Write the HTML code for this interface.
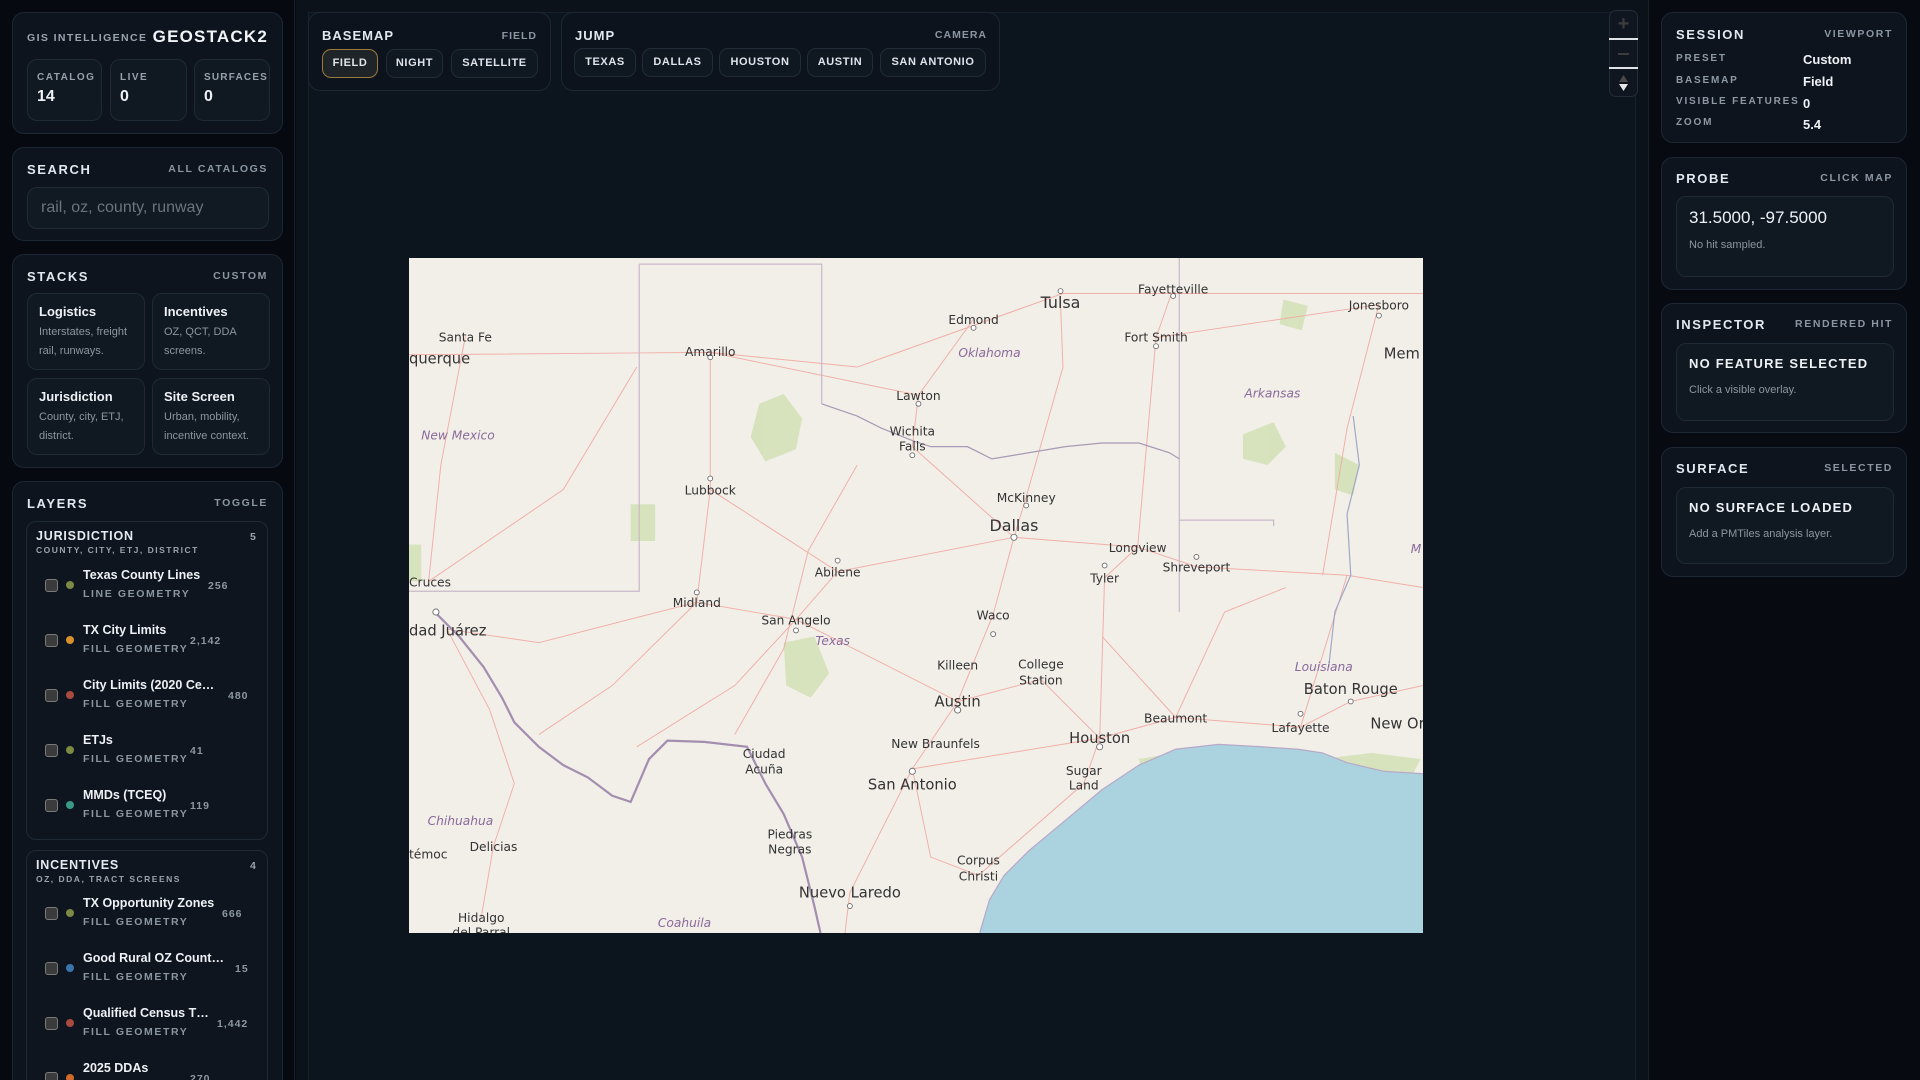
<!DOCTYPE html>
<html><head><meta charset="utf-8">
<style>
*{box-sizing:border-box;margin:0;padding:0}
html,body{width:1920px;height:1080px;overflow:hidden;background:#070b11;font-family:"Liberation Sans",sans-serif;color:#e6eaf0}
#wrap{position:relative;width:1920px;height:1080px;overflow:hidden}
.abs{position:absolute}
.card{position:absolute;background:#0d141d;border:1px solid #1d2733;border-radius:12px}
.h{position:absolute;font-size:13px;font-weight:bold;letter-spacing:1.6px;color:#e3e7ee}
.hr{position:absolute;font-size:10.5px;font-weight:bold;letter-spacing:1.6px;color:#8c96a3;text-align:right}
.box{position:absolute;background:#101821;border:1px solid #1f2a36;border-radius:10px}
.lab{font-size:10px;font-weight:bold;letter-spacing:1.5px;color:#97a1ad}
.num{font-size:16px;font-weight:bold;color:#eef1f5;margin-top:5px}
.tile b{display:block;font-size:13px;color:#eef1f5;margin-bottom:4px}
.tile span{display:block;font-size:11px;line-height:19px;color:#8d96a1}
.row{position:absolute;left:45px;height:40px;width:215px}
.cb{position:absolute;left:0;top:14px;width:13px;height:13px;background:#3b3b3b;border:1px solid #7a7a7a;border-radius:3px}
.dot{position:absolute;left:21px;top:16px;width:8px;height:8px;border-radius:50%}
.nm{position:absolute;left:38px;top:3px;font-size:12.5px;font-weight:bold;color:#eef1f5;white-space:nowrap}
.gm{position:absolute;left:38px;top:23px;font-size:10.5px;font-weight:bold;letter-spacing:1.6px;color:#8b95a1}
.ct{position:absolute;top:15px;font-size:10.5px;font-weight:bold;letter-spacing:1px;color:#8d97a3}
.btn{position:absolute;top:49px;height:29px;border:1px solid #212c38;border-radius:9px;background:#0f1720;font-size:11px;font-weight:bold;letter-spacing:.6px;color:#dfe4ea;text-align:center;line-height:27px}
.kv{position:absolute;left:14px;font-size:10px;font-weight:bold;letter-spacing:1.8px;color:#8f99a5}
.vv{position:absolute;left:141px;font-size:13px;font-weight:bold;color:#eef1f5}
svg text{font-family:"DejaVu Sans","Liberation Sans",sans-serif}
</style></head><body><div id="wrap">

<div class="abs" style="left:0;top:0;width:295px;height:1080px;background:#060a10;border-right:1px solid #18212b"></div>

<div class="card" style="left:12px;top:12px;width:271px;height:122px">
  <div class="abs" style="left:14px;top:19px;font-size:10.5px;font-weight:bold;letter-spacing:1.4px;color:#9aa4b0">GIS INTELLIGENCE</div>
  <div class="abs" style="right:14px;top:14px;font-size:17px;font-weight:bold;letter-spacing:1.2px;color:#f1f4f7">GEOSTACK2</div>
  <div class="box" style="left:14px;top:46px;width:75px;height:62px;padding:12px 9px"><div class="lab">CATALOG</div><div class="num">14</div></div>
  <div class="box" style="left:97px;top:46px;width:77px;height:62px;padding:12px 9px"><div class="lab">LIVE</div><div class="num">0</div></div>
  <div class="box" style="left:181px;top:46px;width:76px;height:62px;padding:12px 9px"><div class="lab" style="letter-spacing:1.2px">SURFACES</div><div class="num">0</div></div>
</div>

<div class="card" style="left:12px;top:147px;width:271px;height:94px">
  <div class="h" style="left:14px;top:14px">SEARCH</div>
  <div class="hr" style="right:14px;top:15px">ALL CATALOGS</div>
  <div class="box" style="left:14px;top:39px;width:242px;height:42px;padding:0 13px;line-height:40px;font-size:16px;color:#6b737c;background:#111922">rail, oz, county, runway</div>
</div>

<div class="card" style="left:12px;top:254px;width:271px;height:214px">
  <div class="h" style="left:14px;top:14px">STACKS</div>
  <div class="hr" style="right:14px;top:15px">CUSTOM</div>
  <div class="box tile" style="left:14px;top:38px;width:118px;height:77px;padding:10px 11px"><b>Logistics</b><span>Interstates, freight rail, runways.</span></div>
  <div class="box tile" style="left:139px;top:38px;width:118px;height:77px;padding:10px 11px"><b>Incentives</b><span>OZ, QCT, DDA screens.</span></div>
  <div class="box tile" style="left:14px;top:123px;width:118px;height:77px;padding:10px 11px"><b>Jurisdiction</b><span>County, city, ETJ, district.</span></div>
  <div class="box tile" style="left:139px;top:123px;width:118px;height:77px;padding:10px 11px"><b>Site Screen</b><span>Urban, mobility, incentive context.</span></div>
</div>

<div class="card" style="left:12px;top:481px;width:271px;height:640px">
  <div class="h" style="left:14px;top:14px">LAYERS</div>
  <div class="hr" style="right:14px;top:15px">TOGGLE</div>
</div>
<div class="box" style="left:26px;top:521px;width:242px;height:319px;background:#0e151e"></div>
<div class="abs" style="left:36px;top:529px;font-size:12.5px;font-weight:bold;letter-spacing:.8px">JURISDICTION</div>
<div class="abs" style="left:36px;top:545px;font-size:8.5px;font-weight:bold;letter-spacing:1.5px;color:#9aa3ae">COUNTY, CITY, ETJ, DISTRICT</div>
<div class="abs" style="left:250px;top:531px;font-size:10.5px;font-weight:bold;color:#9aa3ae">5</div>

<div class="row" style="top:565px"><div class="cb"></div><div class="dot" style="background:#7c8a43"></div><div class="nm">Texas County Lines</div><div class="gm">LINE GEOMETRY</div><div class="ct" style="left:163px">256</div></div>
<div class="row" style="top:620px"><div class="cb"></div><div class="dot" style="background:#d8912c"></div><div class="nm">TX City Limits</div><div class="gm">FILL GEOMETRY</div><div class="ct" style="left:145px">2,142</div></div>
<div class="row" style="top:675px"><div class="cb"></div><div class="dot" style="background:#a84b3e"></div><div class="nm">City Limits (2020 Ce…</div><div class="gm">FILL GEOMETRY</div><div class="ct" style="left:183px">480</div></div>
<div class="row" style="top:730px"><div class="cb"></div><div class="dot" style="background:#7c8a43"></div><div class="nm">ETJs</div><div class="gm">FILL GEOMETRY</div><div class="ct" style="left:145px">41</div></div>
<div class="row" style="top:785px"><div class="cb"></div><div class="dot" style="background:#3a9a87"></div><div class="nm">MMDs (TCEQ)</div><div class="gm">FILL GEOMETRY</div><div class="ct" style="left:145px">119</div></div>

<div class="box" style="left:26px;top:850px;width:242px;height:260px;background:#0e151e"></div>
<div class="abs" style="left:36px;top:858px;font-size:12.5px;font-weight:bold;letter-spacing:.8px">INCENTIVES</div>
<div class="abs" style="left:36px;top:874px;font-size:8.5px;font-weight:bold;letter-spacing:1.5px;color:#9aa3ae">OZ, DDA, TRACT SCREENS</div>
<div class="abs" style="left:250px;top:860px;font-size:10.5px;font-weight:bold;color:#9aa3ae">4</div>

<div class="row" style="top:893px"><div class="cb"></div><div class="dot" style="background:#7c8a43"></div><div class="nm">TX Opportunity Zones</div><div class="gm">FILL GEOMETRY</div><div class="ct" style="left:177px">666</div></div>
<div class="row" style="top:948px"><div class="cb"></div><div class="dot" style="background:#3a74ad"></div><div class="nm">Good Rural OZ Count…</div><div class="gm">FILL GEOMETRY</div><div class="ct" style="left:190px">15</div></div>
<div class="row" style="top:1003px"><div class="cb"></div><div class="dot" style="background:#a84b3e"></div><div class="nm">Qualified Census T…</div><div class="gm">FILL GEOMETRY</div><div class="ct" style="left:172px">1,442</div></div>
<div class="row" style="top:1058px"><div class="cb"></div><div class="dot" style="background:#d06a2c"></div><div class="nm">2025 DDAs</div><div class="gm">FILL GEOMETRY</div><div class="ct" style="left:145px">270</div></div>

<!-- center -->
<div class="abs" style="left:296px;top:0;width:1352px;height:1080px;background:#0b121a"></div>
<div class="abs" style="left:308px;top:12px;width:1328px;height:1080px;border-left:1px solid #17212c;border-top:1px solid #17212c;border-right:1px solid #17212c;background:#0c141d"></div>
<div class="abs" style="left:1648px;top:0;width:1px;height:1080px;background:#18222d"></div>
<div class="abs" style="left:1649px;top:0;width:271px;height:1080px;background:#070b11"></div>

<div class="card" style="left:308px;top:12px;width:243px;height:79px;background:#0c131c">
  <div class="h" style="left:13px;top:15px;letter-spacing:1px">BASEMAP</div>
  <div class="hr" style="right:13px;top:17px;letter-spacing:1px">FIELD</div>
</div>
<div class="btn" style="left:322px;width:56px;background:#1f2429;border-color:#9b7a3d">FIELD</div>
<div class="btn" style="left:386px;width:57px">NIGHT</div>
<div class="btn" style="left:451px;width:87px">SATELLITE</div>

<div class="card" style="left:561px;top:12px;width:439px;height:79px;background:#0c131c">
  <div class="h" style="left:13px;top:15px;letter-spacing:1px">JUMP</div>
  <div class="hr" style="right:12px;top:16px;letter-spacing:1px">CAMERA</div>
</div>
<div class="btn" style="left:574px;width:62px;top:48px">TEXAS</div>
<div class="btn" style="left:642px;width:71px;top:48px">DALLAS</div>
<div class="btn" style="left:719px;width:82px;top:48px">HOUSTON</div>
<div class="btn" style="left:807px;width:66px;top:48px">AUSTIN</div>
<div class="btn" style="left:880px;width:106px;top:48px">SAN ANTONIO</div>

<!-- zoom controls -->
<div class="abs" style="left:1609px;top:10px;width:29px;height:87px;background:#0f161f;border:1px solid #232d38;border-radius:7px"></div>
<div class="abs" style="left:1609px;top:38px;width:29px;height:2px;background:#dfe3e8"></div>
<div class="abs" style="left:1609px;top:67px;width:29px;height:2px;background:#dfe3e8"></div>
<div class="abs" style="left:1609px;top:13px;width:29px;text-align:center;font-size:20px;font-weight:bold;color:#3c3c3c">+</div>
<div class="abs" style="left:1618px;top:53px;width:11px;height:2px;background:#3c3c3c"></div>
<svg class="abs" style="left:1617px;top:75px" width="13" height="16"><path d="M6.5 0L11 7H2Z" fill="#4a4a4a"/><path d="M2 9H11L6.5 16Z" fill="#e6e6e6"/></svg>

<!-- map -->
<svg class="abs" style="left:409px;top:258px" width="1014" height="675" viewBox="334 211 828 551" preserveAspectRatio="none">
<rect x="334" y="211" width="828" height="551" fill="#f2efe9"/>
<g fill="#cfe0b0" opacity=".8">
<path d="M620 330l20-8 15 20-5 25-25 10-12-20z"/><path d="M640 525l25-5 12 30-15 20-20-10z"/><path d="M1015 355l25-10 10 20-15 15-20-5z"/><path d="M1048 245l20 5-5 20-18-5z"/><path d="M515 412l20 0 0 30-20 0z"/><path d="M334 445l10 0 0 30-10 0z"/><path d="M1090 370l20 10-5 25-15-5z"/><path d="M1080 620l40-5 40 5-10 20-60-5z"/><path d="M930 620l30-5 5 20-30 5z"/>
</g>
<g fill="none" stroke="#f0a9a0" stroke-width=".8" opacity=".9">
<path d="M334 290L580 288L700 300L868 240L1010 240L1162 240"/>
<path d="M580 288L580 400L569 492L500 560L440 600"/>
<path d="M580 400L684 467L828 439L929 447L977 463L1100 470L1162 480"/>
<path d="M828 439L811 502L782 573L745 628L694 729L690 762"/>
<path d="M745 628L898 603L960 586L1062 594L1103 573L1162 560"/>
<path d="M828 439L838 406L868 300L866 248"/>
<path d="M684 467L650 506L600 560L520 610"/>
<path d="M782 573L850 555L898 603L885 640L799 715"/>
<path d="M745 628L760 700L799 715"/>
<path d="M828 439L745 365L750 323L795 261"/>
<path d="M944 276L929 447L902 472L898 603"/>
<path d="M958 236L944 276L1126 249"/>
<path d="M365 514L440 525L569 492L650 506L782 573"/>
<path d="M365 514L400 580L420 640L403 691L393 749"/>
<path d="M350 475L360 380L380 275"/>
<path d="M1100 470L1062 594"/><path d="M1126 249L1100 350L1080 470"/>
<path d="M750 323L580 288"/><path d="M520 300L460 400L350 475"/>
<path d="M700 380L660 450L640 530L600 600"/>
<path d="M900 520L960 586L1000 500L1050 480"/>
</g>
<g fill="none" stroke="#c9b9c9" stroke-width="1">
<path d="M522 216V483H334"/><path d="M522 216H671V330"/>
<path d="M963 211V425L1040 425V430"/><path d="M963 425V500"/>
</g>
<path d="M671 330L700 340L720 350L745 360L760 365L790 365L810 375L840 370L870 365L900 362L930 362L955 370L963 375" fill="none" stroke="#a899b5" stroke-width="1"/>
<path d="M355 500L375 520L395 545L410 570L420 590L440 610L460 625L480 635L500 650L515 655L530 620L545 605L575 606L610 610L625 640L640 665L655 700L665 740L670 762" fill="none" stroke="#a48eaf" stroke-width="1.8"/>
<path d="M1105 340L1110 380L1100 420L1103 470L1090 500L1085 545" fill="none" stroke="#a0a9c9" stroke-width="1"/>
<path d="M800 762L808 735L820 715L840 695L870 670L900 645L930 625L960 612L995 608L1030 610L1060 612L1080 615L1100 623L1130 630L1162 632V762Z" fill="#aad3df"/>
<path d="M800 762L808 735L820 715L840 695L870 670L900 645L930 625L960 612L995 608L1030 610L1060 612L1080 615L1100 623L1130 630L1162 632" fill="none" stroke="#b8a8c8" stroke-width="1"/>
<g fill="#fff" stroke="#666" stroke-width=".7">
<circle cx="866" cy="238" r="2"/><circle cx="958" cy="242" r="2"/><circle cx="795" cy="268" r="2"/><circle cx="944" cy="283" r="2"/><circle cx="1126" cy="258" r="2"/><circle cx="580" cy="292" r="2"/><circle cx="750" cy="330" r="2"/><circle cx="745" cy="372" r="2"/><circle cx="580" cy="391" r="2"/><circle cx="838" cy="413" r="2"/><circle cx="828" cy="439" r="2.5"/><circle cx="902" cy="462" r="2"/><circle cx="977" cy="455" r="2"/><circle cx="684" cy="458" r="2"/><circle cx="569" cy="484" r="2"/><circle cx="650" cy="515" r="2"/><circle cx="811" cy="518" r="2"/><circle cx="782" cy="580" r="2.5"/><circle cx="898" cy="610" r="2.5"/><circle cx="745" cy="630" r="2.5"/><circle cx="1103" cy="573" r="2"/><circle cx="356" cy="500" r="2.5"/><circle cx="694" cy="740" r="2"/><circle cx="1062" cy="583" r="2"/>
</g>
<g font-size="11" fill="#333">
<text x="866" y="252" text-anchor="middle" font-size="13">Tulsa</text>
<text x="958" y="240" text-anchor="middle" font-size="10">Fayetteville</text>
<text x="795" y="265" text-anchor="middle" font-size="10">Edmond</text>
<text x="944" y="279" text-anchor="middle" font-size="10">Fort Smith</text>
<text x="1126" y="253" text-anchor="middle" font-size="10">Jonesboro</text>
<text x="1130" y="293" font-size="12">Mem</text>
<text x="380" y="279" text-anchor="middle" font-size="10">Santa Fe</text>
<text x="334" y="297" font-size="12">querque</text>
<text x="580" y="291" text-anchor="middle" font-size="10">Amarillo</text>
<text x="750" y="327" text-anchor="middle" font-size="10">Lawton</text>
<text x="745" y="356" text-anchor="middle" font-size="10">Wichita</text>
<text x="745" y="368" text-anchor="middle" font-size="10">Falls</text>
<text x="580" y="404" text-anchor="middle" font-size="10">Lubbock</text>
<text x="838" y="410" text-anchor="middle" font-size="10">McKinney</text>
<text x="828" y="434" text-anchor="middle" font-size="13">Dallas</text>
<text x="929" y="451" text-anchor="middle" font-size="10">Longview</text>
<text x="977" y="467" text-anchor="middle" font-size="10">Shreveport</text>
<text x="684" y="471" text-anchor="middle" font-size="10">Abilene</text>
<text x="902" y="476" text-anchor="middle" font-size="10">Tyler</text>
<text x="334" y="479" font-size="10">Cruces</text>
<text x="569" y="496" text-anchor="middle" font-size="10">Midland</text>
<text x="650" y="510" text-anchor="middle" font-size="10">San Angelo</text>
<text x="334" y="519" font-size="12">dad Juárez</text>
<text x="811" y="506" text-anchor="middle" font-size="10">Waco</text>
<text x="782" y="547" text-anchor="middle" font-size="10">Killeen</text>
<text x="850" y="546" text-anchor="middle" font-size="10">College</text>
<text x="850" y="559" text-anchor="middle" font-size="10">Station</text>
<text x="1103" y="567" text-anchor="middle" font-size="12">Baton Rouge</text>
<text x="782" y="577" text-anchor="middle" font-size="12">Austin</text>
<text x="960" y="590" text-anchor="middle" font-size="10">Beaumont</text>
<text x="1062" y="598" text-anchor="middle" font-size="10">Lafayette</text>
<text x="1119" y="595" font-size="12">New Or</text>
<text x="764" y="611" text-anchor="middle" font-size="10">New Braunfels</text>
<text x="898" y="607" text-anchor="middle" font-size="12">Houston</text>
<text x="624" y="619" text-anchor="middle" font-size="10">Ciudad</text>
<text x="624" y="632" text-anchor="middle" font-size="10">Acuña</text>
<text x="745" y="645" text-anchor="middle" font-size="12">San Antonio</text>
<text x="885" y="633" text-anchor="middle" font-size="10">Sugar</text>
<text x="885" y="645" text-anchor="middle" font-size="10">Land</text>
<text x="403" y="695" text-anchor="middle" font-size="10">Delicias</text>
<text x="645" y="685" text-anchor="middle" font-size="10">Piedras</text>
<text x="645" y="697" text-anchor="middle" font-size="10">Negras</text>
<text x="334" y="701" font-size="10">témoc</text>
<text x="799" y="706" text-anchor="middle" font-size="10">Corpus</text>
<text x="799" y="719" text-anchor="middle" font-size="10">Christi</text>
<text x="694" y="733" text-anchor="middle" font-size="12">Nuevo Laredo</text>
<text x="393" y="753" text-anchor="middle" font-size="10">Hidalgo</text>
<text x="393" y="765" text-anchor="middle" font-size="10">del Parral</text>
</g>
<g font-size="10" fill="#8a6a9a" font-style="italic">
<text x="808" y="292" text-anchor="middle">Oklahoma</text>
<text x="374" y="359" text-anchor="middle">New Mexico</text>
<text x="1039" y="325" text-anchor="middle">Arkansas</text>
<text x="680" y="527" text-anchor="middle">Texas</text>
<text x="1081" y="548" text-anchor="middle">Louisiana</text>
<text x="376" y="674" text-anchor="middle">Chihuahua</text>
<text x="559" y="757" text-anchor="middle">Coahuila</text>
<text x="1152" y="452">M</text>
</g>
</svg>

<!-- right column -->
<div class="card" style="left:1661px;top:12px;width:246px;height:131px">
  <div class="h" style="left:14px;top:14px">SESSION</div>
  <div class="hr" style="right:13px;top:15px">VIEWPORT</div>
  <div class="kv" style="top:40px">PRESET</div><div class="vv" style="top:39px">Custom</div>
  <div class="kv" style="top:62px">BASEMAP</div><div class="vv" style="top:61px">Field</div>
  <div class="kv" style="top:83px">VISIBLE FEATURES</div><div class="vv" style="top:83px">0</div>
  <div class="kv" style="top:104px">ZOOM</div><div class="vv" style="top:104px">5.4</div>
</div>
<div class="card" style="left:1661px;top:157px;width:246px;height:133px">
  <div class="h" style="left:14px;top:13px">PROBE</div>
  <div class="hr" style="right:13px;top:14px">CLICK MAP</div>
  <div class="box" style="left:14px;top:38px;width:218px;height:81px;padding:11px 12px">
    <div style="font-size:17px;color:#eef1f5">31.5000, -97.5000</div>
    <div style="font-size:11px;color:#8d96a1;margin-top:11px">No hit sampled.</div>
  </div>
</div>
<div class="card" style="left:1661px;top:303px;width:246px;height:130px">
  <div class="h" style="left:14px;top:13px">INSPECTOR</div>
  <div class="hr" style="right:13px;top:14px">RENDERED HIT</div>
  <div class="box" style="left:14px;top:39px;width:218px;height:78px;padding:12px 12px">
    <div style="font-size:13px;font-weight:bold;letter-spacing:1.2px;color:#eef1f5">NO FEATURE SELECTED</div>
    <div style="font-size:11px;color:#8d96a1;margin-top:13px">Click a visible overlay.</div>
  </div>
</div>
<div class="card" style="left:1661px;top:447px;width:246px;height:130px">
  <div class="h" style="left:14px;top:13px">SURFACE</div>
  <div class="hr" style="right:13px;top:14px">SELECTED</div>
  <div class="box" style="left:14px;top:39px;width:218px;height:77px;padding:12px 12px">
    <div style="font-size:13px;font-weight:bold;letter-spacing:1.2px;color:#eef1f5">NO SURFACE LOADED</div>
    <div style="font-size:11px;color:#8d96a1;margin-top:13px">Add a PMTiles analysis layer.</div>
  </div>
</div>

</div></body></html>
